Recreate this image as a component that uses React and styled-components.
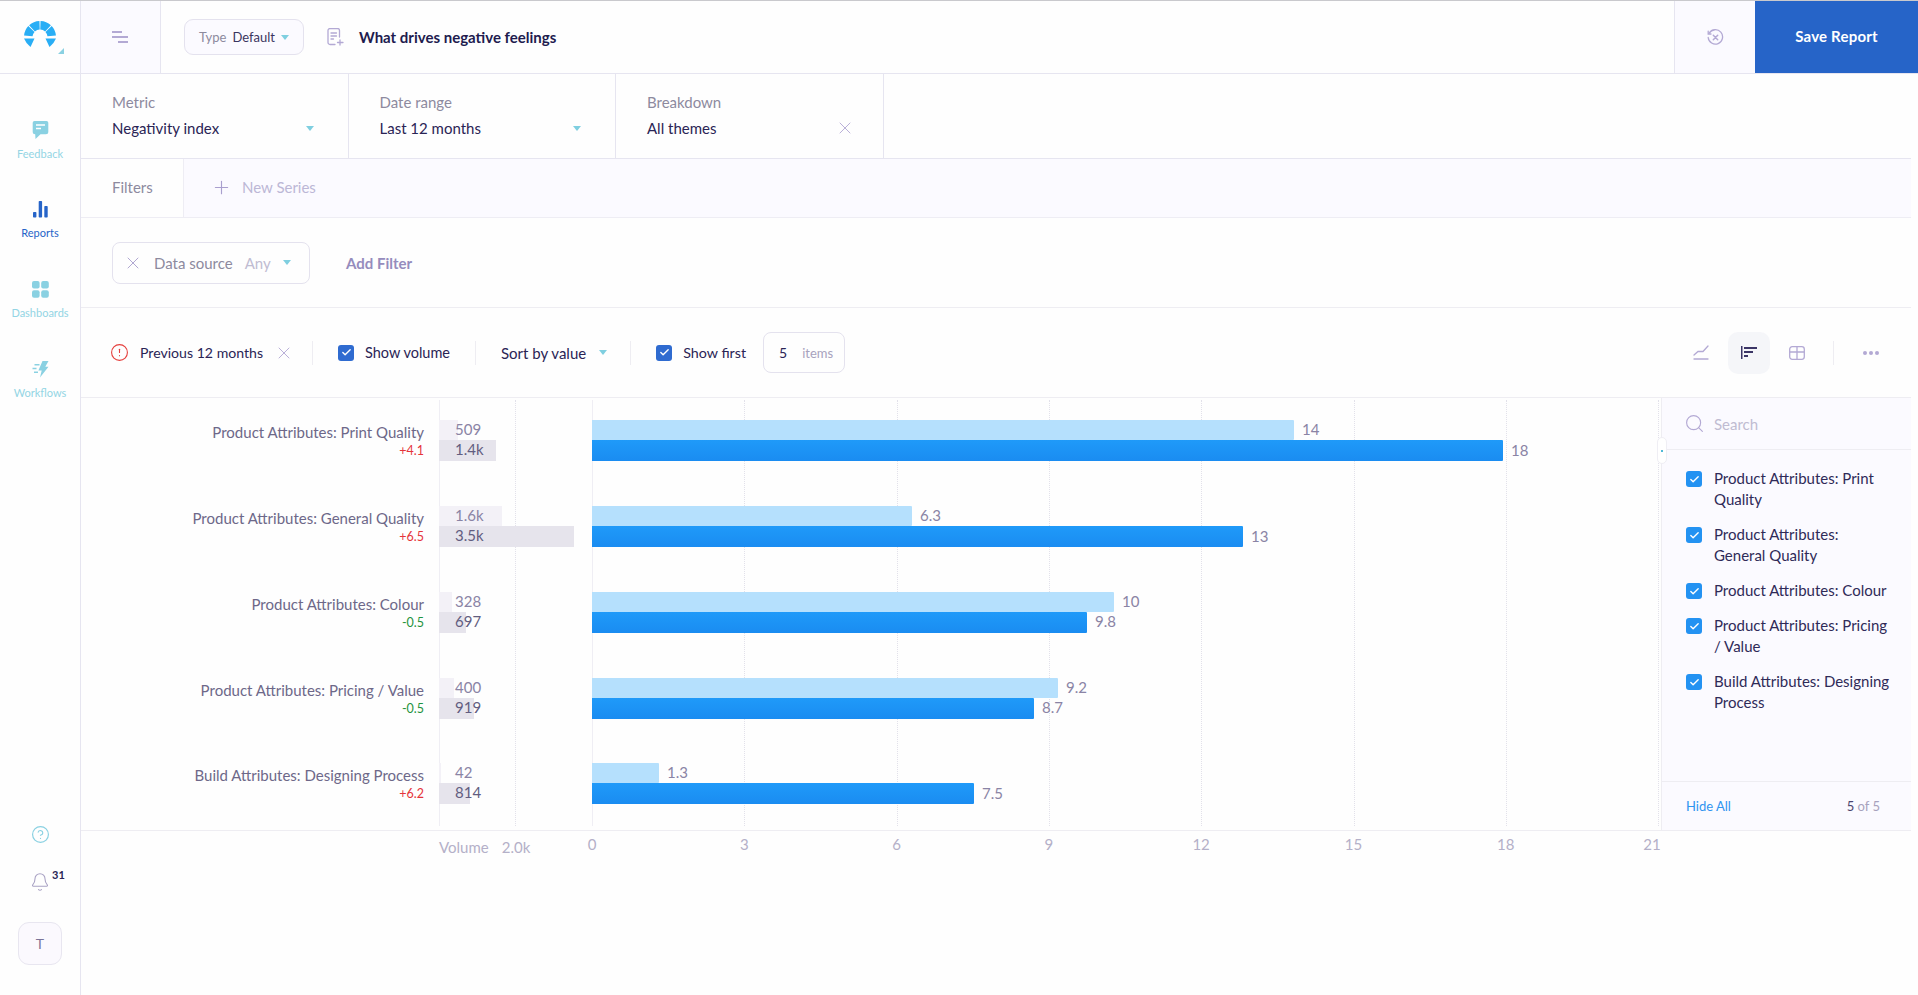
import React from "react";
import styled, { createGlobalStyle } from "styled-components";
import { X, Check, Search, Bell, CircleAlert, CircleHelp, Plus } from "lucide-react";

const UNIT = 50.77;
const VOL_K = 38;

const rows = [
  { name: "Product Attributes: Print Quality", delta: "+4.1", up: true, volA: "509", volB: "1.4k", volAw: 19, volBw: 57, a: 702, b: 911, la: "14", lb: "18" },
  { name: "Product Attributes: General Quality", delta: "+6.5", up: true, volA: "1.6k", volB: "3.5k", volAw: 63, volBw: 135, a: 320, b: 651, la: "6.3", lb: "13" },
  { name: "Product Attributes: Colour", delta: "-0.5", up: false, volA: "328", volB: "697", volAw: 13, volBw: 27, a: 522, b: 495, la: "10", lb: "9.8" },
  { name: "Product Attributes: Pricing / Value", delta: "-0.5", up: false, volA: "400", volB: "919", volAw: 15, volBw: 35, a: 466, b: 442, la: "9.2", lb: "8.7" },
  { name: "Build Attributes: Designing Process", delta: "+6.2", up: true, volA: "42", volB: "814", volAw: 2, volBw: 31, a: 67, b: 382, la: "1.3", lb: "7.5" },
];

const legend = [
  "Product Attributes: Print\nQuality",
  "Product Attributes:\nGeneral Quality",
  "Product Attributes: Colour",
  "Product Attributes: Pricing\n/ Value",
  "Build Attributes: Designing\nProcess",
];

const ticks = [0, 3, 6, 9, 12, 15, 18, 21];

const polar = (r, deg) => {
  const a = ((deg - 90) * Math.PI) / 180;
  return `${(20 + r * Math.cos(a)).toFixed(2)} ${(20 + r * Math.sin(a)).toFixed(2)}`;
};

const wedge = (from, to, inner, outer) =>
  `M${polar(inner, from)} L${polar(outer, from)} A${outer} ${outer} 0 0 1 ${polar(outer, to)} L${polar(inner, to)} A${inner} ${inner} 0 0 0 ${polar(inner, from)}Z`;

const Logo = () => (
  <svg width="40" height="40" viewBox="0 0 40 40" fill="#29aef5">
    <path d={wedge(-43, -2, 7.5, 16)} />
    <path d={wedge(2, 43, 7.5, 16)} />
    <path d={wedge(-85, -47, 7.5, 16)} />
    <path d={wedge(47, 85, 7.5, 16)} />
    <path d="M4 21.500L14.500 21.500 10.500 30Q6 26.500 4 21.500Z" />
    <path d="M36 21.500L25.500 21.500 29.500 30Q34 26.500 36 21.500Z" />
  </svg>
);

const MenuIcon = () => (
  <svg width="16" height="12" viewBox="0 0 16 12" fill="none" stroke="#b3a9d4" strokeWidth="1.8">
    <path d="M0 1h10M0 6h16M6 11h10" />
  </svg>
);

const DocIcon = () => (
  <svg width="17" height="18" viewBox="0 0 17 18" fill="none" stroke="#b3a9d4" strokeWidth="1.3" strokeLinecap="round">
    <path d="M8 16.5H3a2 2 0 0 1-2-2v-12a2 2 0 0 1 2-2h7.5a2 2 0 0 1 2 2V9" />
    <path d="M4 5h5.5M4 8h5.5M4 11h2.5M13 12v5M10.5 14.5h5.5" />
  </svg>
);

const HistoryIcon = () => (
  <svg width="17" height="17" viewBox="0 0 17 17" fill="none" stroke="#b3a9d4" strokeWidth="1.3" strokeLinecap="round">
    <path d="M2.2 4.2A7.2 7.2 0 1 1 1.2 8.5" />
    <path d="M1.2 2.2v2.8h2.8" />
    <path d="M6.3 6.3l4.4 4.4M10.7 6.3l-4.4 4.4" strokeWidth="1.5" />
  </svg>
);

const FeedbackIcon = () => (
  <svg width="17" height="20" viewBox="0 0 17 20">
    <path d="M2.5 1h12A1.8 1.8 0 0 1 16.300 2.800v9A2.500 2.500 0 0 1 13.800 14.300H8.500L3.500 19 3.200 14.300A2.500 2.500 0 0 1 .7 11.800v-9A1.800 1.800 0 0 1 2.500 1z" fill="#8ad1e2" />
    <path d="M4 5h9M4 8.500h5" stroke="#fff" strokeWidth="1.500" />
  </svg>
);

const ReportsIcon = () => (
  <svg width="15" height="17" viewBox="0 0 15 17" fill="#2664c8">
    <rect x="0" y="11" width="3.400" height="5.500" rx=".8" />
    <rect x="5.700" y="0" width="3.400" height="16.500" rx=".8" />
    <rect x="11.300" y="5" width="3.400" height="11.500" rx=".8" />
  </svg>
);

const DashboardsIcon = () => (
  <svg width="17" height="17" viewBox="0 0 17 17" fill="#8ad1e2">
    <rect x="0" y="0" width="7.600" height="7.600" rx="2" />
    <rect x="9.200" y="0" width="7.600" height="7.600" rx="2" />
    <rect x="0" y="9.200" width="7.600" height="7.600" rx="2" />
    <rect x="9.200" y="9.200" width="7.600" height="7.600" rx="2" />
  </svg>
);

const WorkflowsIcon = () => (
  <svg width="17" height="17" viewBox="0 0 17 17" fill="#8ad1e2">
    <path d="M10.500 0L16.500 0 13.300 5.800 16.500 5.800 8 16.500 9.700 9.600 6.400 9.600z" />
    <path d="M2.500 3.800h5M.5 7.500h4M2 11.200h4" stroke="#8ad1e2" strokeWidth="1.500" />
  </svg>
);

const LineIcon = () => (
  <svg width="16" height="15" viewBox="0 0 16 15" fill="none" stroke="#b3a9d4" strokeWidth="1.300" strokeLinecap="round">
    <path d="M1 10L5 6.500h5L15 1M1 14h14" />
  </svg>
);

const SortBarsIcon = () => (
  <svg width="16" height="13" viewBox="0 0 16 13" fill="#3b3566">
    <rect x="0" y="0" width="1.500" height="13" />
    <rect x="3" y="1" width="13" height="2" />
    <rect x="3" y="5" width="9" height="2" />
    <rect x="3" y="9" width="4" height="2" />
  </svg>
);

const TableIcon = () => (
  <svg width="16" height="14" viewBox="0 0 16 14" fill="none" stroke="#b3a9d4" strokeWidth="1.300">
    <rect x=".7" y=".7" width="14.600" height="12.600" rx="2.500" />
    <path d="M.7 6h14.600M8 .7v12.600" />
  </svg>
);

const DotsIcon = () => (
  <svg width="16" height="4" viewBox="0 0 16 4" fill="#b3a9d4">
    <circle cx="2" cy="2" r="2" />
    <circle cx="8" cy="2" r="2" />
    <circle cx="14" cy="2" r="2" />
  </svg>
);

const App = () => {
  return (
    <>
      <GlobalStyle />
      <Shell>
        <Sidebar>
          <LogoCell>
            <Logo />
            <LogoCorner />
          </LogoCell>
          <NavList>
            <NavItem>
              <NavIcon><FeedbackIcon /></NavIcon>
              <NavLabel>Feedback</NavLabel>
            </NavItem>
            <NavItem $active>
              <NavIcon><ReportsIcon /></NavIcon>
              <NavLabel $active>Reports</NavLabel>
            </NavItem>
            <NavItem>
              <NavIcon><DashboardsIcon /></NavIcon>
              <NavLabel>Dashboards</NavLabel>
            </NavItem>
            <NavItem>
              <NavIcon><WorkflowsIcon /></NavIcon>
              <NavLabel>Workflows</NavLabel>
            </NavItem>
          </NavList>
          <SideBottom>
            <CircleHelp size={19} color="#8ad1e2" strokeWidth={1.5} />
            <BellWrap>
              <Bell size={20} color="#a9a2c4" strokeWidth={1.3} />
              <BellCount>31</BellCount>
            </BellWrap>
            <Avatar>T</Avatar>
          </SideBottom>
        </Sidebar>

        <Main>
          <Header>
            <MenuCell><MenuIcon /></MenuCell>
            <TypePill>
              <TypeLabel>Type</TypeLabel>
              <TypeValue>Default</TypeValue>
              <Caret />
            </TypePill>
            <DocWrap><DocIcon /></DocWrap>
            <ReportTitle>What drives negative feelings</ReportTitle>
            <HistoryCell><HistoryIcon /></HistoryCell>
            <SaveButton>Save Report</SaveButton>
          </Header>

          <Body>
            <Selectors>
              <Selector>
                <SelectorLabel>Metric</SelectorLabel>
                <SelectorValue>
                  Negativity index
                  <Caret />
                </SelectorValue>
              </Selector>
              <Selector>
                <SelectorLabel>Date range</SelectorLabel>
                <SelectorValue>
                  Last 12 months
                  <Caret />
                </SelectorValue>
              </Selector>
              <Selector>
                <SelectorLabel>Breakdown</SelectorLabel>
                <SelectorValue>
                  All themes
                  <ClearIcon size={20} color="#b3a9d4" strokeWidth={1.1} />
                </SelectorValue>
              </Selector>
            </Selectors>

            <Tabs>
              <FilterTab>Filters</FilterTab>
              <SeriesTab>
                <Plus size={21} color="#a99fce" strokeWidth={1.3} />
                New Series
              </SeriesTab>
            </Tabs>

            <FilterBar>
              <FilterChip>
                <X size={20} color="#a99fce" strokeWidth={1.1} />
                <ChipName>Data source</ChipName>
                <ChipValue>Any</ChipValue>
                <Caret />
              </FilterChip>
              <AddFilter>Add Filter</AddFilter>
            </FilterBar>

            <Toolbar>
              <ToolGroup $pad="0 18px 0 29px" $gap="11px">
                <CircleAlert size={19} color="#e5403e" strokeWidth={1.4} />
                <ToolText $size="14.1px">Previous 12 months</ToolText>
                <X size={20} color="#b3a9d4" strokeWidth={1.1} />
              </ToolGroup>
              <ToolGroup $pad="0 25px" $gap="11px" $sep>
                <CheckBox $tone="#2f6bd0"><Check size={11} color="#fff" strokeWidth={3} /></CheckBox>
                <ToolText $size="14.5px">Show volume</ToolText>
              </ToolGroup>
              <ToolGroup $pad="0 23px 0 25px" $gap="13px" $sep>
                <ToolText>Sort by value</ToolText>
                <Caret />
              </ToolGroup>
              <ToolGroup $pad="0 0 0 25px" $gap="11px" $sep>
                <CheckBox $tone="#2f6bd0"><Check size={11} color="#fff" strokeWidth={3} /></CheckBox>
                <ToolText $size="14.3px">Show first</ToolText>
                <ItemsBox>
                  <ItemsCount>5</ItemsCount>
                  <ItemsLabel>items</ItemsLabel>
                </ItemsBox>
              </ToolGroup>
              <ViewTools>
                <ViewButton><LineIcon /></ViewButton>
                <ViewButton $active><SortBarsIcon /></ViewButton>
                <ViewButton><TableIcon /></ViewButton>
                <ViewSep />
                <MoreButton><DotsIcon /></MoreButton>
              </ViewTools>
            </Toolbar>

            <ChartBlock>
              <Plot>
                <GridLine $solid style={{ left: 358 }} />
                <GridLine style={{ left: 358 + 2 * VOL_K }} />
                {ticks.map((t) => (
                  <GridLine key={t} $solid={t === 0} style={{ left: 511 + t * UNIT }} />
                ))}
                {rows.map((r) => (
                  <Row key={r.name}>
                    <RowLabel>
                      <RowName>{r.name}</RowName>
                      <RowDelta $up={r.up}>{r.delta}</RowDelta>
                    </RowLabel>
                    <VolCol>
                      <VolBar $tone="#f3f1f7" $text="#8a84a5" style={{ backgroundSize: `${r.volAw}px 100%` }}>{r.volA}</VolBar>
                      <VolBar $tall $tone="#e6e4ec" $text="#625d80" style={{ backgroundSize: `${r.volBw}px 100%` }}>{r.volB}</VolBar>
                    </VolCol>
                    <Bars>
                      <BarLine>
                        <LightBar style={{ width: r.a }} />
                        <BarValue>{r.la}</BarValue>
                      </BarLine>
                      <BarLine $tall>
                        <DarkBar style={{ width: r.b }} />
                        <BarValue>{r.lb}</BarValue>
                      </BarLine>
                    </Bars>
                  </Row>
                ))}
              </Plot>
              <Legend>
                <LegendHandle><HandleDot /></LegendHandle>
                <LegendSearch>
                  <Search size={21} color="#b3a9d4" strokeWidth={1.3} />
                  <SearchText>Search</SearchText>
                </LegendSearch>
                <LegendList>
                  {legend.map((l) => (
                    <LegendItem key={l}>
                      <CheckBox $tone="#2392f2"><Check size={11} color="#fff" strokeWidth={3} /></CheckBox>
                      <LegendText>{l}</LegendText>
                    </LegendItem>
                  ))}
                </LegendList>
                <LegendFooter>
                  <HideAll>Hide All</HideAll>
                  <LegendCount><b>5</b> of 5</LegendCount>
                </LegendFooter>
              </Legend>
            </ChartBlock>

            <Axis>
              <AxisVolume>
                <span>Volume</span>
                <span>2.0k</span>
              </AxisVolume>
              <AxisTicks>
                {ticks.map((t) => (
                  <Tick key={t} $last={t === 21}>{t}</Tick>
                ))}
              </AxisTicks>
            </Axis>
          </Body>
        </Main>
      </Shell>
    </>
  );
};

export default App;

const GlobalStyle = createGlobalStyle`
  html, body { margin: 0; padding: 0; background: #fff; }
  body { font-family: "Lato", "Open Sans", sans-serif; color: #2a2455; }
  * { box-sizing: border-box; }
`;

const Shell = styled.div`
  display: flex;
  width: 1918px;
  height: 995px;
  overflow: hidden;
  border-top: 1px solid #c9c9cd;
  background: #fefefe;
`;

const Sidebar = styled.aside`
  width: 81px;
  flex: none;
  display: flex;
  flex-direction: column;
  border-right: 1px solid #e6e5f0;
`;

const LogoCell = styled.div`
  height: 73px;
  flex: none;
  position: relative;
  display: flex;
  align-items: center;
  justify-content: center;
  border-bottom: 1px solid #e6e5f0;
`;

const LogoCorner = styled.span`
  position: absolute;
  left: 58px;
  top: 47px;
  width: 0;
  height: 0;
  border-left: 6px solid transparent;
  border-bottom: 6px solid #8ad1e2;
`;

const NavList = styled.nav`
  display: flex;
  flex-direction: column;
  gap: 40px;
  padding-top: 46px;
`;

const NavItem = styled.div`
  height: 40px;
  display: flex;
  flex-direction: column;
  align-items: center;
`;

const NavIcon = styled.div`
  height: 20px;
  display: flex;
  align-items: center;
  justify-content: center;
`;

const NavLabel = styled.span`
  margin-top: 7px;
  font-size: 11px;
  line-height: 14px;
  color: ${({ $active }) => ($active ? "#2664c8" : "#93d5e4")};
`;

const SideBottom = styled.div`
  margin-top: auto;
  display: flex;
  flex-direction: column;
  align-items: center;
  padding-bottom: 30px;
`;

const BellWrap = styled.div`
  position: relative;
  height: 20px;
  margin: 28px 0 30px;
`;

const BellCount = styled.span`
  position: absolute;
  left: 22px;
  top: -4px;
  font-size: 11px;
  font-weight: 700;
  color: #2a2455;
`;

const Avatar = styled.div`
  width: 44px;
  height: 43px;
  display: flex;
  align-items: center;
  justify-content: center;
  border: 1px solid #e8e6f0;
  border-radius: 11px;
  background: #fbf9fe;
  font-size: 14px;
  color: #7a7498;
`;

const Main = styled.div`
  flex: 1;
  min-width: 0;
  display: flex;
  flex-direction: column;
`;

const Header = styled.header`
  height: 73px;
  flex: none;
  display: flex;
  align-items: center;
  border-bottom: 1px solid #e6e5f0;
`;

const MenuCell = styled.div`
  width: 80px;
  height: 100%;
  padding-right: 2px;
  display: flex;
  align-items: center;
  justify-content: center;
  background: #fbfaff;
  border-right: 1px solid #e6e5f0;
`;

const TypePill = styled.div`
  margin-left: 23px;
  width: 120px;
  height: 36px;
  display: flex;
  align-items: center;
  justify-content: center;
  gap: 6px;
  border: 1px solid #e4e2ee;
  border-radius: 9px;
  background: #fbfaff;
  font-size: 13px;
`;

const TypeLabel = styled.span`
  color: #8d8a9e;
`;

const TypeValue = styled.span`
  color: #3a3560;
`;

const Caret = styled.span`
  display: inline-block;
  flex: none;
  width: 0;
  height: 0;
  border-left: 4px solid transparent;
  border-right: 4px solid transparent;
  border-top: 5px solid #7fcfe0;
`;

const DocWrap = styled.div`
  margin-left: 23px;
  display: flex;
`;

const ReportTitle = styled.h1`
  margin: -1px 0 0 15px;
  font-size: 15px;
  font-weight: 700;
  color: #211b4e;
`;

const HistoryCell = styled.div`
  margin-left: auto;
  width: 81px;
  height: 100%;
  display: flex;
  align-items: center;
  justify-content: center;
  background: #fbfaff;
  border-left: 1px solid #e6e5f0;
`;

const SaveButton = styled.button`
  width: 163px;
  height: 72px;
  padding: 0 0 2px;
  border: 0;
  background: #2664c8;
  color: #fff;
  font-family: inherit;
  font-size: 15px;
  font-weight: 700;
  letter-spacing: 0.2px;
`;

const Body = styled.div`
  flex: 1;
  padding-right: 7px;
  display: flex;
  flex-direction: column;
`;

const Selectors = styled.div`
  height: 85px;
  flex: none;
  display: flex;
  border-bottom: 1px solid #e6e5f0;
`;

const Selector = styled.div`
  width: 267.5px;
  padding: 17px 34px 0 31px;
  border-right: 1px solid #e6e5f0;
`;

const SelectorLabel = styled.div`
  font-size: 15px;
  line-height: 22px;
  color: #8d8a9e;
`;

const SelectorValue = styled.div`
  margin-top: 4px;
  height: 22px;
  display: flex;
  align-items: center;
  justify-content: space-between;
  font-size: 15px;
  line-height: 22px;
  color: #2a2455;
`;

const ClearIcon = styled(X)`
  margin-right: -6px;
`;

const Tabs = styled.div`
  height: 59px;
  flex: none;
  display: flex;
  border-bottom: 1px solid #eeedf4;
`;

const FilterTab = styled.div`
  width: 102px;
  padding: 0 0 2px 31px;
  display: flex;
  align-items: center;
  font-size: 15px;
  color: #8d8a9e;
`;

const SeriesTab = styled.div`
  flex: 1;
  padding: 0 0 2px 27px;
  display: flex;
  align-items: center;
  gap: 10px;
  background: #fbfaff;
  border-left: 1px solid #eeedf4;
  font-size: 15px;
  color: #bcb7d6;
`;

const FilterBar = styled.div`
  height: 90px;
  flex: none;
  padding-left: 31px;
  display: flex;
  align-items: center;
  gap: 36px;
  border-bottom: 1px solid #eeedf2;
`;

const FilterChip = styled.div`
  width: 198px;
  height: 42px;
  padding-left: 10px;
  display: flex;
  align-items: center;
  border: 1px solid #e4e2ee;
  border-radius: 8px;
  font-size: 15px;
  ${Caret} {
    margin-left: 12px;
  }
`;

const ChipName = styled.span`
  margin-left: 11px;
  color: #8d8a9e;
`;

const ChipValue = styled.span`
  margin-left: 12px;
  color: #c0bcd2;
`;

const AddFilter = styled.span`
  font-size: 15px;
  font-weight: 700;
  color: #958cbd;
`;

const Toolbar = styled.div`
  height: 90px;
  flex: none;
  display: flex;
  align-items: center;
  border-bottom: 1px solid #eeedf2;
`;

const ToolGroup = styled.div`
  height: 24px;
  padding: ${({ $pad }) => $pad};
  display: flex;
  align-items: center;
  gap: ${({ $gap }) => $gap || "12px"};
  border-left: ${({ $sep }) => ($sep ? "1px solid #eeedf2" : "0")};
`;

const ToolText = styled.span`
  font-size: ${({ $size }) => $size || "15px"};
  color: #2a2455;
  white-space: nowrap;
`;

const CheckBox = styled.span`
  width: 16px;
  height: 16px;
  flex: none;
  display: flex;
  align-items: center;
  justify-content: center;
  border-radius: 3px;
  background: ${({ $tone }) => $tone};
`;

const ItemsBox = styled.div`
  margin-left: 6px;
  width: 82px;
  height: 41px;
  padding-left: 15px;
  display: flex;
  align-items: center;
  gap: 15px;
  border: 1px solid #e4e2ee;
  border-radius: 8px;
`;

const ItemsCount = styled.span`
  font-size: 14px;
  color: #2a2455;
`;

const ItemsLabel = styled.span`
  font-size: 13px;
  color: #a7a2bd;
`;

const ViewTools = styled.div`
  margin-left: auto;
  padding-right: 32px;
  display: flex;
  align-items: center;
`;

const ViewButton = styled.div`
  width: 42px;
  height: 42px;
  margin-left: 6px;
  display: flex;
  align-items: center;
  justify-content: center;
  border-radius: 10px;
  background: ${({ $active }) => ($active ? "#f5f6f9" : "transparent")};
`;

const ViewSep = styled.span`
  width: 1px;
  height: 24px;
  margin-left: 15px;
  background: #eeedf2;
`;

const MoreButton = styled.div`
  margin-left: 29px;
  display: flex;
`;

const ChartBlock = styled.div`
  height: 433px;
  flex: none;
  display: flex;
  border-bottom: 1px solid #eeedf2;
`;

const Plot = styled.div`
  position: relative;
  width: 1580px;
  flex: none;
  padding-bottom: 4px;
`;

const GridLine = styled.span`
  position: absolute;
  top: 2px;
  bottom: 4px;
  width: 0;
  border-left: 1px ${({ $solid }) => ($solid ? "solid #efeef4" : "dotted #e2e1ea")};
`;

const Row = styled.div`
  position: relative;
  height: 85.75px;
  display: grid;
  grid-template-columns: 343px 153px 1fr;
  column-gap: 15px;
  align-items: center;
`;

const RowLabel = styled.div`
  text-align: right;
`;

const RowName = styled.div`
  font-size: 15px;
  line-height: 20px;
  color: #6d6889;
`;

const RowDelta = styled.div`
  margin-top: 1px;
  font-size: 12.5px;
  line-height: 16px;
  color: ${({ $up }) => ($up ? "#e5343a" : "#1f9440")};
`;

const VolCol = styled.div`
  display: flex;
  flex-direction: column;
`;

const VolBar = styled.div`
  height: ${({ $tall }) => ($tall ? "21px" : "20px")};
  padding-left: 16px;
  font-size: 15px;
  line-height: 18px;
  white-space: nowrap;
  color: ${({ $text }) => $text};
  background-image: linear-gradient(${({ $tone }) => $tone}, ${({ $tone }) => $tone});
  background-repeat: no-repeat;
`;

const Bars = styled.div`
  margin-left: -15px;
  display: flex;
  flex-direction: column;
`;

const BarLine = styled.div`
  height: ${({ $tall }) => ($tall ? "21px" : "20px")};
  display: flex;
  align-items: center;
`;

const LightBar = styled.div`
  height: 100%;
  background: #b5e0fd;
  border-radius: 0 1px 1px 0;
`;

const DarkBar = styled.div`
  height: 100%;
  background: linear-gradient(#1f9af9, #1a8cf1);
  border-radius: 0 1px 1px 0;
`;

const BarValue = styled.span`
  margin: -2px 0 0 8px;
  font-size: 15px;
  color: #8a84a5;
`;

const Legend = styled.div`
  position: relative;
  flex: 1;
  display: flex;
  flex-direction: column;
  background: #fbfaff;
  border-left: 1px solid #eeedf2;
`;

const LegendHandle = styled.div`
  position: absolute;
  left: -5px;
  top: 39px;
  width: 10px;
  height: 27px;
  display: flex;
  align-items: center;
  justify-content: center;
  background: #fff;
  border: 1px solid #efeef4;
  border-radius: 5px;
`;

const HandleDot = styled.span`
  width: 2px;
  height: 2px;
  background: #4fb9d6;
`;

const LegendSearch = styled.div`
  height: 52px;
  flex: none;
  padding-left: 22px;
  display: flex;
  align-items: center;
  gap: 9px;
  border-bottom: 1px solid #eeedf2;
`;

const SearchText = styled.span`
  font-size: 15px;
  color: #c0bcd2;
`;

const LegendList = styled.div`
  flex: 1;
  padding: 18px 0 0 24px;
  display: flex;
  flex-direction: column;
  gap: 14px;
`;

const LegendItem = styled.div`
  display: flex;
  gap: 12px;
  ${CheckBox} {
    margin-top: 3px;
  }
`;

const LegendText = styled.span`
  font-size: 15px;
  line-height: 21px;
  white-space: pre-line;
  color: #2f2a58;
`;

const LegendFooter = styled.div`
  height: 49px;
  flex: none;
  padding: 0 31px 0 24px;
  display: flex;
  align-items: center;
  justify-content: space-between;
  border-top: 1px solid #eeedf2;
  font-size: 13px;
`;

const HideAll = styled.span`
  color: #2f94f0;
`;

const LegendCount = styled.span`
  color: #a7a2bd;
  b {
    font-weight: 400;
    color: #4a4570;
  }
`;

const Axis = styled.div`
  display: flex;
  padding-left: 358px;
`;

const AxisVolume = styled.div`
  width: 153px;
  padding-top: 7px;
  display: flex;
  gap: 13px;
  font-size: 15px;
  color: #b4b0c8;
`;

const AxisTicks = styled.div`
  width: 1066px;
  padding-top: 4px;
  display: flex;
  justify-content: space-between;
`;

const Tick = styled.span`
  width: 0;
  display: flex;
  justify-content: center;
  transform: translateX(${({ $last }) => ($last ? "-6px" : "0")});
  font-size: 15px;
  color: #b4b0c8;
`;
